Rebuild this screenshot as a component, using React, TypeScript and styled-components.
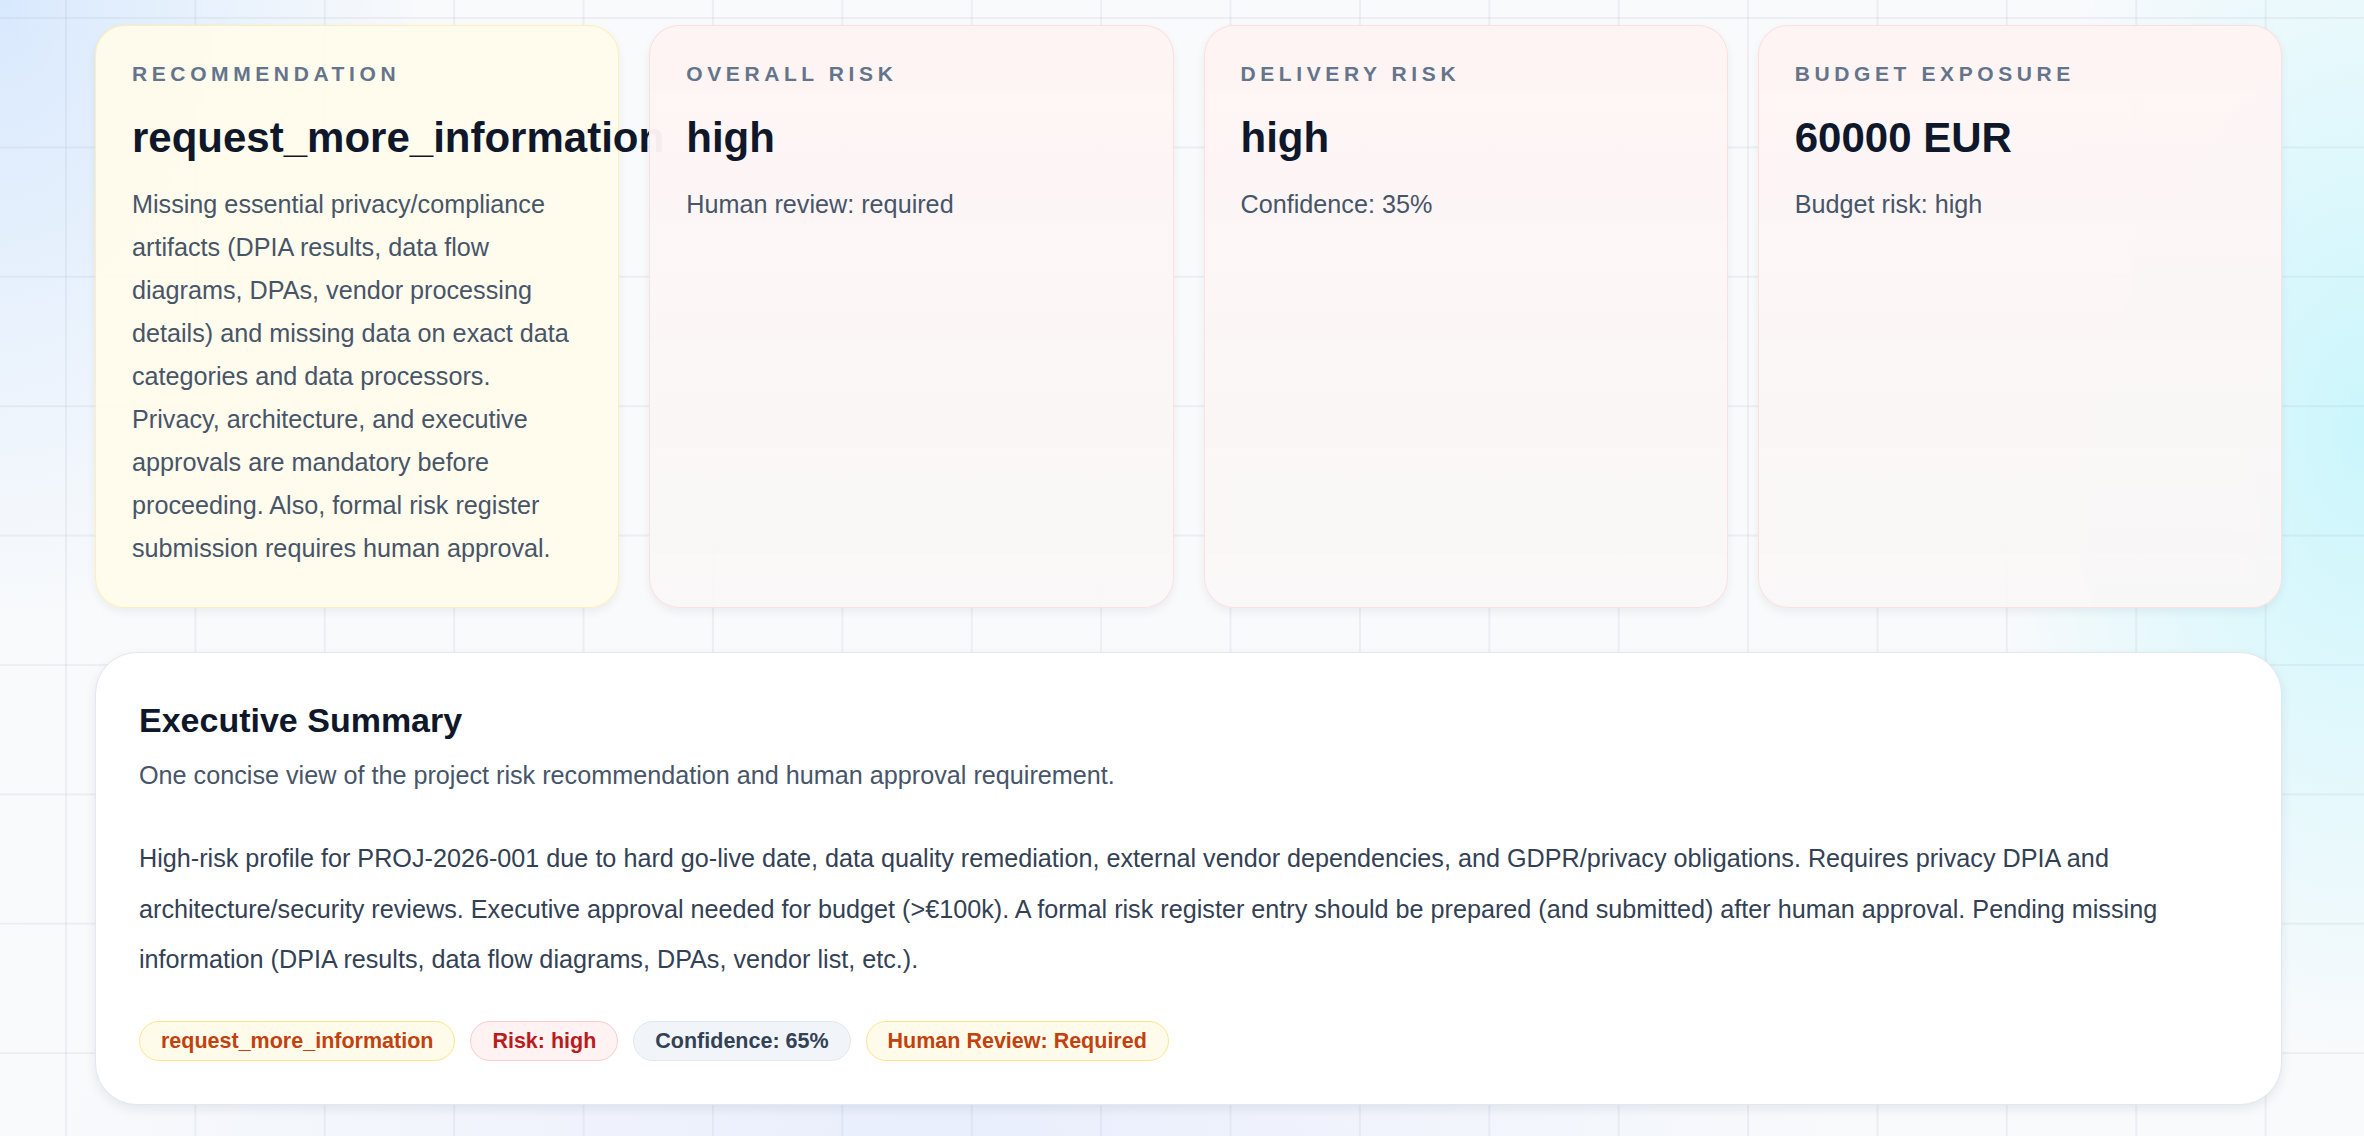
import styled, { createGlobalStyle, css } from "styled-components";

const GlobalStyle = createGlobalStyle`
    html, body {
        margin: 0;
        padding: 0;
    }
    body {
        font-family: "Liberation Sans", Arial, Helvetica, sans-serif;
        color: #0f172a;
        background: #f8fafc;
    }
`;

const Page = styled.div`
    min-height: 100vh;
    box-sizing: border-box;
    padding: 25px 82px 30px 95px;
    display: flex;
    flex-direction: column;
    gap: 44px;
    background:
        linear-gradient(to right, rgba(148, 163, 184, 0.13) 2px, transparent 2px),
        linear-gradient(to bottom, rgba(148, 163, 184, 0.13) 2px, transparent 2px),
        radial-gradient(ellipse 420px 620px at 0% 0%, rgba(191, 219, 254, 0.55), transparent 100%),
        radial-gradient(ellipse 380px 620px at 100% 38%, rgba(165, 243, 252, 0.55), transparent 100%),
        radial-gradient(ellipse 900px 260px at 40% 100%, rgba(199, 210, 254, 0.3), transparent 100%),
        #f8fafc;
    background-size: 129.4px 129.4px, 129.4px 129.4px, auto, auto, auto, auto;
    background-position: 65px 17px, 65px 17px, 0 0, 0 0, 0 0, 0 0;
`;

const MetricRow = styled.section`
    display: grid;
    grid-template-columns: repeat(4, minmax(0, 1fr));
    gap: 30px;
`;

type Tone = "amber" | "red";

/* position: relative so each card paints over the overflowing title of the previous one */
const MetricCard = styled.div<{ $tone: Tone }>`
    position: relative;
    box-sizing: border-box;
    padding: 36px 44px 37px 36px;
    border-radius: 30px;
    box-shadow: 0 4px 10px rgba(15, 23, 42, 0.06);
    ${({ $tone }) =>
        $tone === "amber"
            ? css`
                  border: 1px solid rgba(253, 230, 138, 0.55);
                  background: rgba(255, 251, 236, 0.96);
              `
            : css`
                  border: 1px solid rgba(254, 202, 202, 0.5);
                  background: linear-gradient(
                      180deg,
                      rgba(255, 244, 244, 0.97) 0%,
                      rgba(252, 246, 246, 0.96) 45%,
                      rgba(249, 247, 247, 0.95) 100%
                  );
              `}
`;

const MetricLabel = styled.div`
    font-size: 21px;
    line-height: 24px;
    font-weight: 700;
    letter-spacing: 4.6px;
    text-transform: uppercase;
    color: #64748b;
`;

const MetricValue = styled.div`
    margin-top: 27px;
    font-size: 42px;
    line-height: 50px;
    font-weight: 700;
    color: #0f172a;
    white-space: nowrap;
`;

const MetricNote = styled.p`
    margin: 20px 0 0;
    font-size: 25.2px;
    line-height: 43px;
    color: #475569;
`;

const SummaryCard = styled.section`
    box-sizing: border-box;
    padding: 47px 43px 43px;
    border-radius: 42px;
    background: #ffffff;
    border: 1px solid #e2e8f0;
    box-shadow: 0 4px 12px rgba(15, 23, 42, 0.08);
`;

const SummaryTitle = styled.h2`
    margin: 0;
    font-size: 34px;
    line-height: 40px;
    font-weight: 700;
    color: #0f172a;
`;

const SummarySubtitle = styled.p`
    margin: 17px 0 0;
    font-size: 25.2px;
    line-height: 37px;
    color: #475569;
`;

const SummaryText = styled.p`
    margin: 39px 0 0;
    font-size: 25.2px;
    line-height: 50.5px;
    color: #334155;
`;

const ChipRow = styled.div`
    margin-top: 36px;
    display: flex;
    flex-wrap: wrap;
    gap: 15px;
`;

type ChipTone = "amber" | "red" | "slate";

const chipColors: Record<ChipTone, { bg: string; border: string; fg: string }> = {
    amber: { bg: "#fffbeb", border: "#fde68a", fg: "#c2410c" },
    red: { bg: "#fef2f2", border: "#fecaca", fg: "#b91c1c" },
    slate: { bg: "#f1f5f9", border: "#e2e8f0", fg: "#334155" },
};

const Chip = styled.span<{ $tone: ChipTone }>`
    display: inline-flex;
    align-items: center;
    padding: 7px 21px;
    border-radius: 999px;
    font-size: 21.5px;
    line-height: 24px;
    font-weight: 700;
    background: ${({ $tone }) => chipColors[$tone].bg};
    border: 1.5px solid ${({ $tone }) => chipColors[$tone].border};
    color: ${({ $tone }) => chipColors[$tone].fg};
`;

const metrics: { label: string; value: string; note: string; tone: Tone }[] = [
    {
        label: "Recommendation",
        value: "request_more_information",
        note: "Missing essential privacy/compliance artifacts (DPIA results, data flow diagrams, DPAs, vendor processing details) and missing data on exact data categories and data processors. Privacy, architecture, and executive approvals are mandatory before proceeding. Also, formal risk register submission requires human approval.",
        tone: "amber",
    },
    { label: "Overall Risk", value: "high", note: "Human review: required", tone: "red" },
    { label: "Delivery Risk", value: "high", note: "Confidence: 35%", tone: "red" },
    { label: "Budget Exposure", value: "60000 EUR", note: "Budget risk: high", tone: "red" },
];

const chips: { text: string; tone: ChipTone }[] = [
    { text: "request_more_information", tone: "amber" },
    { text: "Risk: high", tone: "red" },
    { text: "Confidence: 65%", tone: "slate" },
    { text: "Human Review: Required", tone: "amber" },
];

export default function App() {
    return (
        <>
            <GlobalStyle />
            <Page>
                <MetricRow>
                    {metrics.map((m) => (
                        <MetricCard key={m.label} $tone={m.tone}>
                            <MetricLabel>{m.label}</MetricLabel>
                            <MetricValue>{m.value}</MetricValue>
                            <MetricNote>{m.note}</MetricNote>
                        </MetricCard>
                    ))}
                </MetricRow>

                <SummaryCard>
                    <SummaryTitle>Executive Summary</SummaryTitle>
                    <SummarySubtitle>
                        One concise view of the project risk recommendation and human approval requirement.
                    </SummarySubtitle>
                    <SummaryText>
                        High-risk profile for PROJ-2026-001 due to hard go-live date, data quality remediation,
                        external vendor dependencies, and GDPR/privacy obligations. Requires privacy DPIA and
                        architecture/security reviews. Executive approval needed for budget (&gt;€100k). A formal
                        risk register entry should be prepared (and submitted) after human approval. Pending
                        missing information (DPIA results, data flow diagrams, DPAs, vendor list, etc.).
                    </SummaryText>
                    <ChipRow>
                        {chips.map((c) => (
                            <Chip key={c.text} $tone={c.tone}>
                                {c.text}
                            </Chip>
                        ))}
                    </ChipRow>
                </SummaryCard>
            </Page>
        </>
    );
}
